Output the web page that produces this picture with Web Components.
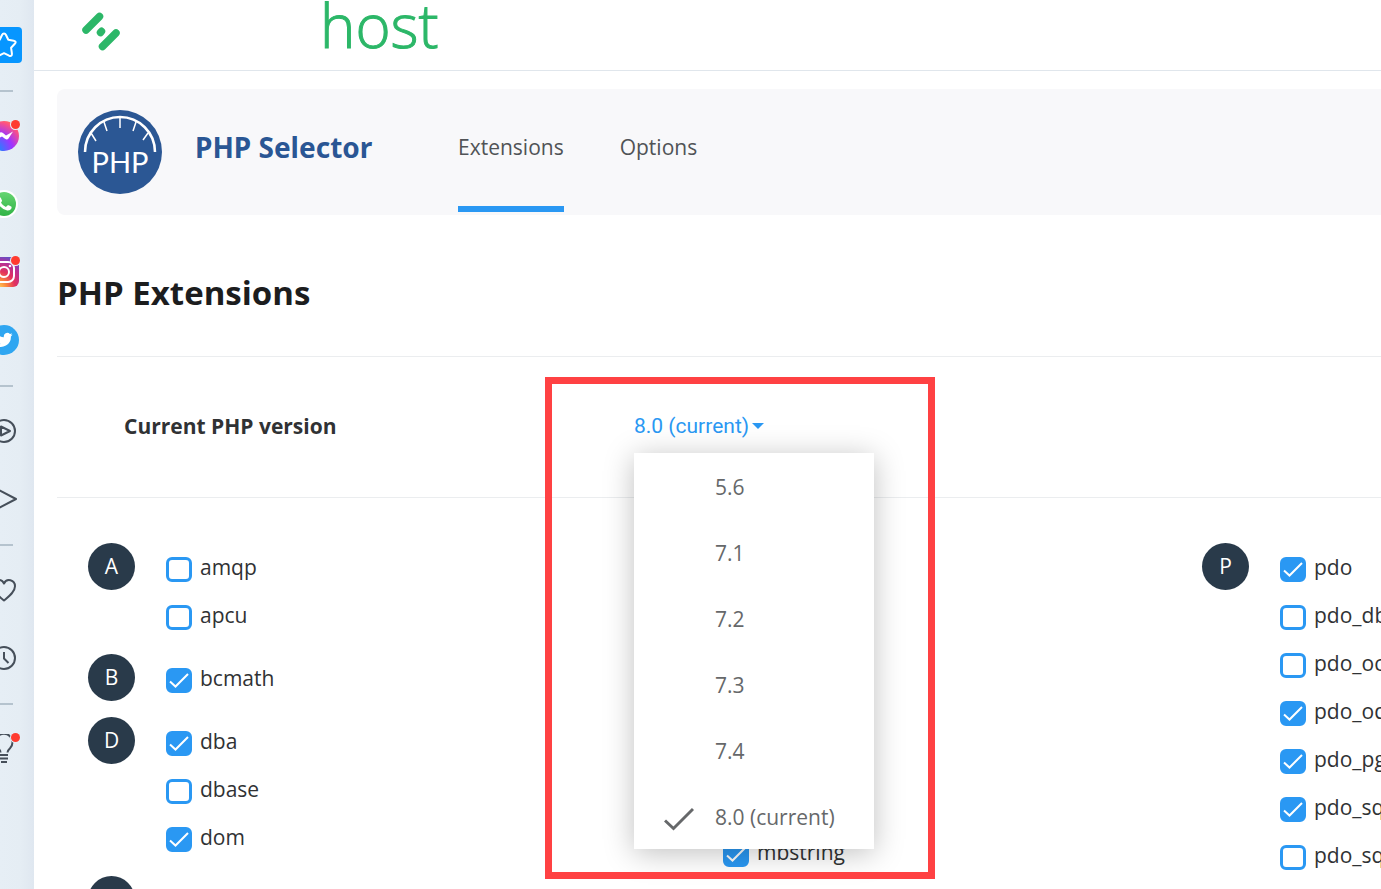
<!DOCTYPE html>
<html lang="en">
<head>
<meta charset="utf-8">
<title>PHP Selector</title>
<style>
  body {
    margin: 0;
    background: #fff;
    color: #303234;
    font-family: "Open Sans", "Noto Sans", sans-serif;
    font-size: 21px;
    line-height: 28px;
    --accent: #2a98f3;
    --line: #ebedef;
  }
</style>
</head>
<body>
<st-app></st-app>

<script>
//clones a chunk of markup into the shadow root of a component
function attachTemplate(element, html) {
  const template = document.createElement('template');
  template.innerHTML = html;
  element.attachShadow({ mode: 'open' });
  element.shadowRoot.appendChild(template.content.cloneNode(true));
}

//one entry of the browser side bar
class SideItem extends HTMLElement {
  constructor() {
    super();
    attachTemplate(this, `
      <style>
        :host {
          display: grid;
          place-items: center;
          height: 68px;
        }
        button {
          display: block;
          position: relative;
          padding: 0;
          border: none;
          background: none;
          color: #464f5a;
        }
        :host([alert]) button::after {
          content: '';
          position: absolute;
          top: -1px;
          right: -1px;
          width: 9px;
          height: 9px;
          border-radius: 50%;
          background: #ff3b30;
          box-shadow: 0 0 0 1px #e6eef5;
        }
      </style>
      <button type="button"><slot></slot></button>`);
  }

  connectedCallback() {
    this.shadowRoot.querySelector('button').setAttribute('aria-label', this.getAttribute('label'));
  }
}
window.customElements.define('st-side-item', SideItem);

class SideBar extends HTMLElement {
  constructor() {
    super();
    attachTemplate(this, `
      <style>
        :host {
          display: flex;
          justify-content: flex-end;
          flex: 0 0 34px;
          overflow: hidden;
          background: linear-gradient(90deg, #e6eef5 0, #e5edf4 60%, #dfe7f0 100%);
        }
        nav {
          flex: 0 0 60px;
          padding-top: 11px;
        }
        hr {
          width: 18px;
          height: 2px;
          margin: 11px auto 10px;
          border: none;
          background: #b5c3ce;
        }
        svg {
          display: block;
          fill: none;
          stroke-linejoin: round;
        }
        .line {
          stroke: currentColor;
          stroke-width: 2;
        }
      </style>

      <nav aria-label="Sidebar">
        <st-side-item label="Speed dial">
          <svg width="36" height="36" viewBox="0 0 36 36">
            <rect width="36" height="36" rx="4" fill="#0796ff"/>
            <path d="M18 6.500q1.300 0 2 1.500l2.300 4.800 5.400.9q3.200.7 1.100 3.100l-3.700 4 .8 5.700q.2 3.400-2.800 2.200L18 26.200l-5.100 2.500q-3 1.200-2.800-2.200l.8-5.700-3.700-4q-2.100-2.400 1.100-3.100l5.400-.9L16 8q.7-1.500 2-1.500z" stroke="#fff" stroke-width="2"/>
          </svg>
        </st-side-item>
        <hr>
        <st-side-item label="Messenger" alert>
          <svg width="30" height="30" viewBox="0 0 30 30">
            <defs>
              <radialGradient id="ms" cx=".2" cy="1" r="1.1">
                <stop offset="0" stop-color="#0099ff"/>
                <stop offset=".55" stop-color="#a033ff"/>
                <stop offset=".9" stop-color="#ff5280"/>
                <stop offset="1" stop-color="#ff7061"/>
              </radialGradient>
            </defs>
            <circle cx="15" cy="15" r="15" fill="url(#ms)"/>
            <path d="M6 19l4.500-7q1.500-1.500 3.500 0l3 2.500 7-4-4.500 7q-1.500 1.700-3.500.2l-3-2.200z" fill="#fff"/>
          </svg>
        </st-side-item>
        <st-side-item label="WhatsApp">
          <svg width="30" height="30" viewBox="0 0 30 30">
            <defs>
              <linearGradient id="wa" x1="0" y1="0" x2="0" y2="1">
                <stop offset="0" stop-color="#67d571"/>
                <stop offset="1" stop-color="#2fb346"/>
              </linearGradient>
            </defs>
            <circle cx="15" cy="15" r="14" fill="#fff"/>
            <circle cx="15" cy="15" r="12" fill="url(#wa)"/>
            <path d="M9.500 9q1.500-1.500 2.500.3l1 2.200q.2.800-1 2.200 1.800 3 4.900 4.300l1.500-1.500q.5-.6 1.300-.2l2.400 1.200q.8.400.3 1.900-1.200 2.500-4.200 2.100-4.500-.8-8-5.200-3.200-4.300-.7-7.300z" fill="#fff"/>
          </svg>
        </st-side-item>
        <st-side-item label="Instagram" alert>
          <svg width="30" height="30" viewBox="0 0 30 30">
            <defs>
              <radialGradient id="ig" cx=".3" cy="1.050" r="1.150">
                <stop offset="0" stop-color="#ffd760"/>
                <stop offset=".25" stop-color="#fb8a3c"/>
                <stop offset=".5" stop-color="#e3315c"/>
                <stop offset=".78" stop-color="#b2309b"/>
                <stop offset="1" stop-color="#5157d0"/>
              </radialGradient>
            </defs>
            <rect width="30" height="30" rx="6" fill="url(#ig)"/>
            <rect x="5" y="5" width="20" height="20" rx="6" stroke="#fff" stroke-width="2"/>
            <circle cx="15" cy="15" r="5" stroke="#fff" stroke-width="2"/>
            <circle cx="21" cy="9" r="1.300" fill="#fff"/>
          </svg>
        </st-side-item>
        <st-side-item label="Twitter">
          <svg width="30" height="30" viewBox="0 0 30 30">
            <circle cx="15" cy="15" r="15" fill="#2fa6f1"/>
            <path d="M23.600 9.600a7 7 0 0 1-2 .6 3.500 3.500 0 0 0 1.500-2 7 7 0 0 1-2.200.9 3.500 3.500 0 0 0-6 3.200 10 10 0 0 1-7.200-3.700 3.500 3.500 0 0 0 1.100 4.700 3.500 3.500 0 0 1-1.600-.4 3.500 3.500 0 0 0 2.800 3.500 3.500 3.500 0 0 1-1.600 0 3.500 3.500 0 0 0 3.300 2.400A7 7 0 0 1 6.500 20.300a10 10 0 0 0 15.400-8.900 7 7 0 0 0 1.700-1.800z" fill="#fff"/>
          </svg>
        </st-side-item>
        <hr>
        <st-side-item label="Player">
          <svg class="line" width="24" height="24" viewBox="0 0 24 24">
            <circle cx="12" cy="12" r="11"/>
            <path d="M9 7.500v9l9-4.500z"/>
          </svg>
        </st-side-item>
        <st-side-item label="Flow">
          <svg class="line" width="26" height="26" viewBox="0 0 26 26">
            <path d="M2 1l23 12L2 25l4-12z"/>
          </svg>
        </st-side-item>
        <hr>
        <st-side-item label="Favourites">
          <svg class="line" width="24" height="24" viewBox="0 0 24 24">
            <path d="M12 22.500C7 18.500 1 14 1 8.300 1 1.500 9.500-.2 12 5.500c2.500-5.700 11-4 11 2.800 0 5.700-6 10.200-11 14.200z"/>
          </svg>
        </st-side-item>
        <st-side-item label="History">
          <svg class="line" width="24" height="24" viewBox="0 0 24 24">
            <circle cx="12" cy="12" r="11"/>
            <path d="M12 6v6.500l4.500 4.500"/>
          </svg>
        </st-side-item>
        <hr>
        <st-side-item label="Tips" alert>
          <svg class="line" width="30" height="30" viewBox="0 0 30 30">
            <path d="M11.500 18.500q0-2-2.500-4.300a8.500 8.500 0 1 1 12 0q-2.500 2.300-2.500 4.300M11 21h8M11 24.500h8M12 28h6"/>
          </svg>
        </st-side-item>
      </nav>`);
  }
}
window.customElements.define('st-side-bar', SideBar);

class SiteHeader extends HTMLElement {
  constructor() {
    super();
    attachTemplate(this, `
      <style>
        :host {
          display: flex;
          align-items: flex-start;
          gap: 198px;
          height: 70px;
          padding-left: 46px;
          border-bottom: 1px solid #e0e6ec;
        }
        svg {
          flex: none;
          margin-top: 11px;
        }
        span {
          color: #2cb768;
          font-size: 60px;
          font-weight: 300;
          line-height: 50px;
          -webkit-text-stroke: 1px #2cb768;
        }
      </style>

      <svg width="42" height="42" viewBox="0 0 42 42" stroke="#2cb768" stroke-width="7.500" stroke-linecap="round" role="img" aria-label="Logo">
        <path d="M6 19L19.500 5.500M22.500 35.500L36 22M20.500 21.500l1-1.200"/>
      </svg>
      <span>host</span>`);
  }
}
window.customElements.define('st-site-header', SiteHeader);

//the panel with the icon, the title and the tabs
class TitlePanel extends HTMLElement {
  constructor() {
    super();
    attachTemplate(this, `
      <style>
        :host {
          display: flex;
          height: 126px;
          padding-left: 21px;
          border-radius: 8px;
          background: #f8f8fa;
        }
        svg {
          flex: none;
          align-self: center;
        }
        h2 {
          width: 263px;
          margin: 0;
          padding-left: 33px;
          box-sizing: border-box;
          color: #2a5694;
          font-family: "Noto Sans", sans-serif;
          font-size: 28px;
          font-weight: 700;
          line-height: 116px;
        }
        nav {
          display: flex;
          gap: 56px;
          margin-bottom: 3px;
          padding-left: 33px;
        }
        a {
          border-bottom: 6px solid transparent;
          color: #505356;
          line-height: 116px;
          text-decoration: none;
        }
        a[aria-current] {
          border-color: var(--accent);
        }
      </style>

      <svg width="84" height="84" viewBox="0 0 84 84" fill="none" stroke="#fff">
        <circle cx="42" cy="42" r="42" fill="#2b5794" stroke="none"/>
        <path d="M7 42a35 35 0 0 1 70 0" stroke-width="2.500"/>
        <path d="M42 8v10M26 12l3 9M58 12l-3 9M13 23l5 8M70 23l-5 7" stroke-width="1.500"/>
        <text x="42" y="63" text-anchor="middle" fill="#fff" stroke="none" font-family="Lato" font-size="29">PHP</text>
      </svg>
      <h2>PHP Selector</h2>
      <nav>
        <a href="#extensions" aria-current="page">Extensions</a>
        <a href="#options">Options</a>
      </nav>`);
  }
}
window.customElements.define('st-title-panel', TitlePanel);

class VersionPicker extends HTMLElement {
  constructor() {
    super();
    attachTemplate(this, `
      <style>
        :host {
          display: block;
          position: relative;
        }
        button {
          display: flex;
          align-items: center;
          border: none;
          background: none;
          font: inherit;
        }
        .toggle {
          gap: 3px;
          height: 52px;
          padding: 0 0 2px;
          color: var(--accent);
          font-family: Roboto, sans-serif;
        }
        .menu {
          position: absolute;
          top: 100%;
          left: 0;
          width: 240px;
          background: #fff;
          box-shadow: 0 4px 28px rgba(0, 0, 0, 0.25);
        }
        .menu button {
          width: 100%;
          height: 66px;
          padding: 1px 0 0 30px;
          color: #66686a;
          font-size: 21px;
        }
        .menu span {
          flex: 0 0 51px;
        }
        .menu svg {
          display: block;
          margin-top: 4px;
        }
      </style>

      <button class="toggle" type="button" id="version" aria-haspopup="menu" aria-expanded="true">
        8.0 (current)
        <svg width="12" height="6" viewBox="0 0 12 6" fill="currentColor"><path d="M0 0h12L6 6z"/></svg>
      </button>
      <div class="menu" role="menu"></div>`);
  }

  connectedCallback() {
    const menu = this.shadowRoot.querySelector('.menu');
    for(const version of ['5.6', '7.1', '7.2', '7.3', '7.4', '8.0 (current)']) {
      const isCurrent = version.includes('current');
      const item = document.createElement('button');
      item.type = 'button';
      item.setAttribute('role', 'menuitemradio');
      item.setAttribute('aria-checked', isCurrent);
      item.innerHTML = `<span></span>${version}`;
      //only the version in use has a check mark
      if(isCurrent) {
        item.firstChild.innerHTML = `
          <svg width="30" height="24" viewBox="0 0 30 24" fill="none" stroke="#66686a" stroke-width="3">
            <path d="M1 13.500l8.500 8L29 2"/>
          </svg>`;
      }
      menu.appendChild(item);
    }

    const toggle = this.shadowRoot.querySelector('.toggle');
    toggle.addEventListener('click', () => {
      menu.hidden = !menu.hidden;
      toggle.setAttribute('aria-expanded', !menu.hidden);
    });
  }
}
window.customElements.define('st-version-picker', VersionPicker);

//red frame laid over the element it is slotted around
class HighlightFrame extends HTMLElement {
  constructor() {
    super();
    attachTemplate(this, `
      <style>
        :host {
          display: block;
          position: relative;
          z-index: 1;
        }
        .frame {
          position: absolute;
          top: -24px;
          left: -89px;
          width: 390px;
          height: 502px;
          box-sizing: border-box;
          border: 7px solid #ff4143;
          pointer-events: none;
        }
      </style>
      <slot></slot>
      <div class="frame"></div>`);
  }
}
window.customElements.define('st-highlight-frame', HighlightFrame);

class ExtensionCheck extends HTMLElement {
  constructor() {
    super();
    attachTemplate(this, `
      <style>
        :host {
          display: block;
        }
        label {
          display: flex;
          align-items: center;
          gap: 8px;
          height: 48px;
        }
        .box {
          display: grid;
          margin-top: 5px;
        }
        input, svg {
          grid-area: 1 / 1;
          width: 26px;
          height: 25px;
          margin: 0;
        }
        input {
          appearance: none;
          box-sizing: border-box;
          border: 3px solid var(--accent);
          border-radius: 6px;
          background: #fff;
        }
        input:checked {
          background: var(--accent);
        }
        svg {
          visibility: hidden;
          pointer-events: none;
        }
        input:checked + svg {
          visibility: visible;
        }
      </style>

      <label>
        <span class="box">
          <input type="checkbox">
          <svg viewBox="0 0 26 25" fill="none" stroke="#fff" stroke-width="2"><path d="M4 13.500l5.500 5L22 6"/></svg>
        </span>
        <slot></slot>
      </label>`);
  }

  connectedCallback() {
    this.shadowRoot.querySelector('input').checked = this.hasAttribute('checked');
  }
}
window.customElements.define('st-extension-check', ExtensionCheck);

//a letter and the extensions that start with it
class ExtensionGroup extends HTMLElement {
  constructor() {
    super();
    attachTemplate(this, `
      <style>
        :host {
          display: grid;
          grid-template-columns: 47px auto;
          gap: 31px;
        }
        .letter {
          height: 47px;
          border-radius: 50%;
          background: #293a4a;
          color: #fff;
          line-height: 47px;
          text-align: center;
        }
        .letter:empty {
          visibility: hidden;
        }
      </style>
      <div class="letter"></div>
      <div><slot></slot></div>`);
  }

  connectedCallback() {
    this.shadowRoot.querySelector('.letter').textContent = this.getAttribute('letter');
  }
}
window.customElements.define('st-extension-group', ExtensionGroup);

class ExtensionList extends HTMLElement {
  constructor() {
    super();
    attachTemplate(this, `
      <style>
        :host {
          display: grid;
          grid-template-columns: repeat(3, minmax(557px, 1fr));
          padding: 45px 0 0 31px;
        }
        .column {
          display: flex;
          flex-flow: column;
          gap: 15px;
        }
        .lower {
          padding-top: 285px;
        }
      </style>

      <div class="column">
        <st-extension-group letter="A">
          <st-extension-check>amqp</st-extension-check>
          <st-extension-check>apcu</st-extension-check>
        </st-extension-group>
        <st-extension-group letter="B">
          <st-extension-check checked>bcmath</st-extension-check>
        </st-extension-group>
        <st-extension-group letter="D">
          <st-extension-check checked>dba</st-extension-check>
          <st-extension-check>dbase</st-extension-check>
          <st-extension-check checked>dom</st-extension-check>
        </st-extension-group>
        <st-extension-group letter="E"></st-extension-group>
      </div>
      <div class="column lower">
        <st-extension-group letter="">
          <st-extension-check checked>mbstring</st-extension-check>
        </st-extension-group>
      </div>
      <div class="column">
        <st-extension-group letter="P">
          <st-extension-check checked>pdo</st-extension-check>
          <st-extension-check>pdo_dblib</st-extension-check>
          <st-extension-check>pdo_oci</st-extension-check>
          <st-extension-check checked>pdo_odbc</st-extension-check>
          <st-extension-check checked>pdo_pgsql</st-extension-check>
          <st-extension-check checked>pdo_sqlite</st-extension-check>
          <st-extension-check>pdo_sqlsrv</st-extension-check>
        </st-extension-group>
      </div>`);
  }
}
window.customElements.define('st-extension-list', ExtensionList);

class App extends HTMLElement {
  constructor() {
    super();
    attachTemplate(this, `
      <style>
        :host {
          display: flex;
          height: 100vh;
          overflow: hidden;
        }
        main {
          flex: 1 1 0;
          min-width: 0;
          overflow: hidden;
        }
        .content {
          width: max-content;
          min-width: 100%;
          box-sizing: border-box;
          padding: 18px 0 0 23px;
        }
        h1 {
          margin: 56px 0 41px;
          color: #1c1d1e;
          font-size: 33px;
          line-height: 44px;
        }
        .version {
          display: grid;
          grid-template-columns: 510px auto;
          align-items: center;
          justify-content: start;
          height: 140px;
          padding-left: 67px;
          border: solid var(--line);
          border-width: 1px 0;
        }
        strong {
          padding-bottom: 2px;
        }
      </style>

      <st-side-bar></st-side-bar>
      <main>
        <st-site-header></st-site-header>
        <div class="content">
          <st-title-panel></st-title-panel>
          <h1>PHP Extensions</h1>
          <div class="version">
            <strong>Current PHP version</strong>
            <st-highlight-frame>
              <st-version-picker></st-version-picker>
            </st-highlight-frame>
          </div>
          <st-extension-list></st-extension-list>
        </div>
      </main>`);
  }
}
window.customElements.define('st-app', App);
</script>
</body>
</html>
